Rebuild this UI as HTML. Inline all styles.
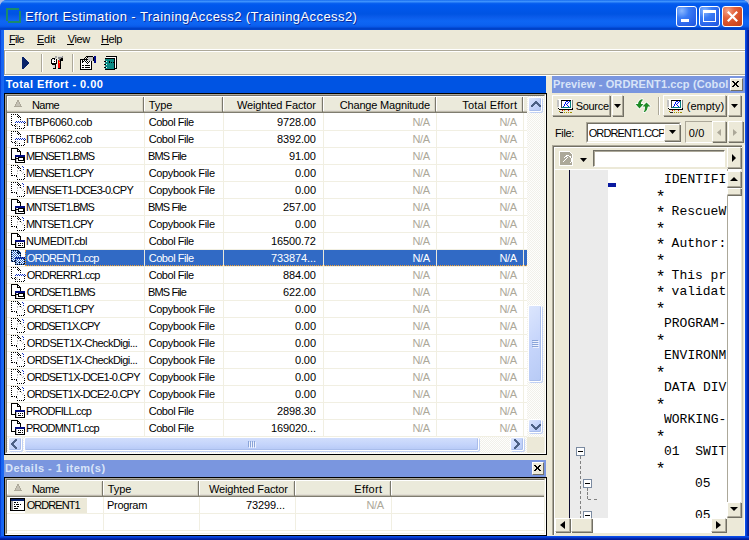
<!DOCTYPE html><html><head><meta charset="utf-8"><style>
*{margin:0;padding:0;box-sizing:border-box}
html,body{width:749px;height:540px;overflow:hidden;background:#a8bce8}
body{position:relative;font-family:"Liberation Sans",sans-serif;font-size:11px;color:#000}
.a,.t,.ic{position:absolute}
.t{white-space:nowrap;line-height:13px}
.m{position:absolute;font-family:"Liberation Mono",monospace;font-size:13px;line-height:16px;white-space:pre;overflow:hidden}
.st{display:inline-block;width:7.8px;font-size:17px;vertical-align:top;line-height:19px;text-indent:-0.5px}
.rb{position:absolute;background:#ece9d8;border:1px solid #fff;border-right-color:#aca899;border-bottom-color:#aca899;box-shadow:1px 1px 0 #716f64}
</style></head><body>

<div class="a" style="left:0px;top:0px;width:749px;height:540px;background:linear-gradient(90deg,#0842d8 0,#0842d8 1px,#1663f0 1px,#1a6af5 4px,#0a50f0 745px,#0846e0 746px,#0432c0 747px,#001c98 748px);border-radius:7px 7px 0 0"></div>
<div class="a" style="left:0px;top:536px;width:749px;height:4px;background:linear-gradient(180deg,#0a50f0 0,#0846e0 1px,#0432c0 2px,#001c98 3px);"></div>
<div class="a" style="left:0;top:0;width:749px;height:30px;border-radius:7px 7px 0 0;background:linear-gradient(180deg,#0a5ce8 0,#3d95ff 1px,#3c8ffb 2px,#0b63f0 3px,#0058ee 5px,#0054e3 14px,#0a5bea 17px,#0e66f4 21px,#0c62f0 25px,#0857e6 27px,#0044cc 28px,#0040c4 29px,#0046d0 30px)"></div>
<div class="a" style="left:6px;top:8px;width:13px;height:2px;background:#1a8a6c;"></div>
<div class="a" style="left:6px;top:8px;width:2px;height:13px;background:#1a8a6c;"></div>
<div class="a" style="left:19px;top:11px;width:2px;height:12px;background:#1a8a6c;"></div>
<div class="a" style="left:8px;top:21px;width:13px;height:2px;background:#1a8a6c;"></div>
<div class="t" style="left:25.00px;top:9px;color:#fff;letter-spacing:0.422px;line-height:16px;font-size:13px;text-shadow:1px 1px 0 #0a2a9a">Effort Estimation - TrainingAccess2 (TrainingAccess2)</div>
<div class="a" style="left:676px;top:6px;width:21px;height:21px;border:1px solid #fff;border-radius:3px;background:radial-gradient(circle at 25% 20%,#8ab8ff 0,#3a7cf5 35%,#2a64ea 70%,#1f55dc 100%)"></div>
<div class="a" style="left:699px;top:6px;width:21px;height:21px;border:1px solid #fff;border-radius:3px;background:radial-gradient(circle at 25% 20%,#8ab8ff 0,#3a7cf5 35%,#2a64ea 70%,#1f55dc 100%)"></div>
<div class="a" style="left:722px;top:6px;width:21px;height:21px;border:1px solid #fff;border-radius:3px;background:radial-gradient(circle at 25% 20%,#f4a48a 0,#e3613a 35%,#d24a22 70%,#c0401e 100%)"></div>
<div class="a" style="left:681px;top:19px;width:8px;height:3px;background:#fff;"></div>
<div class="a" style="left:703px;top:10px;width:13px;height:12px;border:1px solid #fff;border-top-width:3px"></div>
<svg class="a" style="left:722px;top:6px" width="21" height="21"><path d="M5.8 5.8L15.2 15.2M15.2 5.8L5.8 15.2" stroke="#fff" stroke-width="2.2"/></svg>
<div class="a" style="left:4px;top:30px;width:741px;height:506px;background:#ece9d8;"></div>
<div class="t" style="left:9.00px;top:33px;color:#000;letter-spacing:-0.681px;line-height:13px">File</div>
<div class="a" style="left:9px;top:44px;width:6px;height:1px;background:#000;"></div>
<div class="t" style="left:37.00px;top:33px;color:#000;letter-spacing:-0.239px;line-height:13px">Edit</div>
<div class="a" style="left:37px;top:44px;width:7px;height:1px;background:#000;"></div>
<div class="t" style="left:67.70px;top:33px;color:#000;letter-spacing:-0.411px;line-height:13px">View</div>
<div class="a" style="left:67px;top:44px;width:7px;height:1px;background:#000;"></div>
<div class="t" style="left:101.00px;top:33px;color:#000;letter-spacing:-0.406px;line-height:13px">Help</div>
<div class="a" style="left:101px;top:44px;width:8px;height:1px;background:#000;"></div>
<div class="a" style="left:4px;top:49px;width:741px;height:1px;background:#fff;"></div>
<div class="a" style="left:4px;top:50px;width:741px;height:1px;background:#aca899;"></div>
<div class="a" style="left:5px;top:51px;width:740px;height:1px;background:#fff;"></div>
<div class="a" style="left:4px;top:50px;width:1px;height:25px;background:#aca899;"></div>
<div class="a" style="left:5px;top:51px;width:1px;height:23px;background:#fff;"></div>
<div class="a" style="left:4px;top:74px;width:741px;height:1px;background:#aca899;"></div>
<div class="a" style="left:4px;top:75px;width:741px;height:1px;background:#fff;"></div>
<svg class="a" style="left:22px;top:57px" width="8" height="12" shape-rendering="crispEdges"><path d="M0 0h1l6 6l-6 6h-1z" fill="#0a246a"/></svg>
<div class="a" style="left:41px;top:54px;width:1px;height:18px;background:#aca899;"></div>
<div class="a" style="left:42px;top:54px;width:1px;height:18px;background:#fff;"></div>
<svg class="a" style="left:50px;top:55px" width="15" height="15" shape-rendering="crispEdges">
<rect x="1" y="4" width="6" height="5" fill="#000"/><rect x="2" y="3" width="4" height="7" fill="#000"/><rect x="2" y="4" width="4" height="4" fill="#fff"/><rect x="2" y="4" width="1" height="1" fill="#c8c8c8"/>
<rect x="4" y="3" width="1" height="2" fill="#000"/><rect x="4" y="6" width="1" height="1" fill="#000"/><rect x="5" y="1" width="2" height="2" fill="#a8a8a8"/><rect x="5" y="3" width="1" height="1" fill="#c8c8c8"/>
<rect x="3" y="10" width="2" height="3" fill="#d4d4d4"/><rect x="5" y="10" width="1" height="4" fill="#000"/><rect x="3" y="13" width="3" height="1" fill="#000"/>
<rect x="8" y="1" width="5" height="3" fill="#8c8c8c"/><rect x="8" y="1" width="4" height="1" fill="#dcdcdc"/><rect x="11" y="3" width="2" height="3" fill="#000"/>
<rect x="8" y="5" width="2" height="9" fill="#ff0000"/><rect x="10" y="4" width="1" height="10" fill="#000"/><rect x="9" y="4" width="1" height="2" fill="#6a7a8a"/><rect x="9" y="7" width="1" height="1" fill="#ffe000"/><rect x="8" y="13" width="3" height="1" fill="#000"/>
</svg>
<div class="a" style="left:72px;top:54px;width:1px;height:18px;background:#aca899;"></div>
<div class="a" style="left:73px;top:54px;width:1px;height:18px;background:#fff;"></div>
<svg class="a" style="left:77px;top:53px" width="22" height="18" shape-rendering="crispEdges">
<rect x="3" y="6" width="12" height="11" fill="#000"/><rect x="4" y="7" width="10" height="9" fill="#fff"/>
<rect x="5" y="12" width="2" height="1" fill="#000"/><rect x="8" y="12" width="5" height="1" fill="#000"/><rect x="5" y="14" width="2" height="1" fill="#000"/><rect x="8" y="14" width="5" height="1" fill="#000"/>
<path d="M9 3h1M8 4h1M10 4h1M7 5h1M9 5h1M11 5h1M6 6h1M8 6h1M10 6h1M12 6h1M5 7h1M7 7h1M9 7h1M11 7h1M13 7h1M6 8h1M8 8h1M10 8h1M12 8h1M9 9h1M11 9h1M10 10h1" stroke="#000"/>
<rect x="5" y="8" width="1" height="2" fill="#000"/>
<rect x="10" y="3" width="6" height="1" fill="#000"/><rect x="11" y="4" width="5" height="4" fill="#c4c4c4"/><rect x="16" y="4" width="1" height="4" fill="#000"/>
<rect x="17" y="3" width="2" height="7" fill="#000a8a"/>
</svg>
<svg class="a" style="left:100px;top:53px" width="22" height="18" shape-rendering="crispEdges">
<rect x="6" y="3" width="11" height="13" fill="#000"/><rect x="6" y="4" width="10" height="11" fill="#fff"/>
<rect x="5" y="5" width="10" height="12" fill="#000"/><rect x="5" y="6" width="9" height="10" fill="#0a8a84"/>
<path d="M4 8h3M4 11h3M4 14h3" stroke="#000"/><rect x="6" y="8" width="1" height="1" fill="#fff"/><rect x="6" y="11" width="1" height="1" fill="#fff"/><rect x="6" y="14" width="1" height="1" fill="#fff"/>
<rect x="9" y="8" width="1" height="2" fill="#000"/><rect x="11" y="9" width="1" height="1" fill="#000"/><rect x="13" y="9" width="1" height="1" fill="#000"/>
</svg>
<div class="a" style="left:4px;top:76px;width:542px;height:17px;background:#0054e3;"></div>
<div class="t" style="left:5.70px;top:78px;color:#fff;letter-spacing:0.450px;line-height:13px;font-weight:bold">Total Effort - 0.00</div>
<div class="a" style="left:4px;top:93px;width:543px;height:362px;background:#fff;border:1px solid #000"></div>
<div class="a" style="left:5px;top:94px;width:541px;height:360px;background:transparent;border:1px solid #aca899;border-right-color:#fff;border-bottom-color:#fff"></div>
<div class="a" style="left:6px;top:95px;width:539px;height:358px;background:transparent;border:1px solid #716f64;border-right-color:#f1efe2;border-bottom-color:#f1efe2"></div>
<div class="a" style="left:7px;top:96px;width:520px;height:17px;background:#ebeadb;border-top:1px solid #fff;border-left:1px solid #fff"></div>
<div class="a" style="left:7px;top:110px;width:520px;height:1px;background:#e2ded5;"></div>
<div class="a" style="left:7px;top:111px;width:520px;height:1px;background:#bdbaab;"></div>
<div class="a" style="left:7px;top:112px;width:520px;height:1px;background:#7f7c70;"></div>
<div class="a" style="left:142px;top:98px;width:1px;height:13px;background:#d8d5c6;"></div>
<div class="a" style="left:143px;top:97px;width:1px;height:15px;background:#7a786c;"></div>
<div class="a" style="left:144px;top:97px;width:1px;height:14px;background:#fff;"></div>
<div class="a" style="left:221px;top:98px;width:1px;height:13px;background:#d8d5c6;"></div>
<div class="a" style="left:222px;top:97px;width:1px;height:15px;background:#7a786c;"></div>
<div class="a" style="left:223px;top:97px;width:1px;height:14px;background:#fff;"></div>
<div class="a" style="left:321px;top:98px;width:1px;height:13px;background:#d8d5c6;"></div>
<div class="a" style="left:322px;top:97px;width:1px;height:15px;background:#7a786c;"></div>
<div class="a" style="left:323px;top:97px;width:1px;height:14px;background:#fff;"></div>
<div class="a" style="left:434px;top:98px;width:1px;height:13px;background:#d8d5c6;"></div>
<div class="a" style="left:435px;top:97px;width:1px;height:15px;background:#7a786c;"></div>
<div class="a" style="left:436px;top:97px;width:1px;height:14px;background:#fff;"></div>
<div class="a" style="left:521px;top:98px;width:1px;height:13px;background:#d8d5c6;"></div>
<div class="a" style="left:522px;top:97px;width:1px;height:15px;background:#7a786c;"></div>
<div class="a" style="left:523px;top:97px;width:1px;height:14px;background:#fff;"></div>
<svg class="a" style="left:14px;top:100px" width="8" height="7" shape-rendering="crispEdges"><path d="M3 0h2v2h1v2h1v2h1v1h-8v-1h1v-2h1v-2h1z" fill="#aca899"/><path d="M3 2h2v2h1v2h-4v-2h1z" fill="#c4c1b4"/></svg>
<div class="t" style="left:32.00px;top:99px;color:#000;letter-spacing:-0.586px;line-height:13px">Name</div>
<div class="t" style="left:148.70px;top:99px;color:#000;letter-spacing:-0.087px;line-height:13px">Type</div>
<div class="t" style="left:236.90px;top:99px;color:#000;letter-spacing:-0.100px;line-height:13px">Weighted Factor</div>
<div class="t" style="left:339.82px;top:99px;color:#000;letter-spacing:-0.185px;line-height:13px">Change Magnitude</div>
<div class="t" style="left:462.22px;top:99px;color:#000;letter-spacing:0.218px;line-height:13px">Total Effort</div>
<div class="a" style="left:7px;top:130px;width:520px;height:1px;background:#f1efe2;"></div>
<svg class="ic" style="left:11px;top:114px" width="16" height="16" shape-rendering="crispEdges"><path d="M0 0h1v1h-1zM2 0h1v1h-1zM4 0h1v1h-1zM6 0h1v1h-1zM7 1h1v1h-1zM0 2h1v1h-1zM6 2h1v1h-1zM8 2h1v1h-1zM7 3h1v1h-1zM9 3h1v1h-1zM0 4h1v1h-1zM9 5h1v1h-1zM0 6h1v1h-1zM0 8h1v1h-1zM13 9h1v1h-1zM0 10h1v1h-1zM4 10h1v1h-1zM1 11h1v1h-1zM3 11h1v1h-1zM13 11h1v1h-1zM4 12h1v1h-1zM8 12h1v1h-1zM13 13h1v1h-1zM4 14h1v1h-1zM6 14h1v1h-1zM8 14h1v1h-1zM10 14h1v1h-1zM12 14h1v1h-1z" fill="#000"/><path d="M4 8h1v1h-1zM5 7h1v1h-1zM6 8h1v1h-1zM7 7h1v1h-1zM8 8h1v1h-1zM9 7h1v1h-1zM10 8h1v1h-1zM11 7h1v1h-1zM12 8h1v1h-1zM13 7h1v1h-1zM14 8h1v1h-1z" fill="#1030c0"/><path d="M5 11h1v1h-1zM6 10h1v1h-1zM6 12h1v1h-1z" fill="#c0c0c0"/></svg>
<div class="t" style="left:26.00px;top:116px;color:#000;letter-spacing:-0.309px;line-height:13px">ITBP6060.cob</div>
<div class="t" style="left:148.70px;top:116px;color:#000;letter-spacing:-0.452px;line-height:13px">Cobol File</div>
<div class="t" style="left:276.89px;top:116px;color:#000;letter-spacing:-0.109px;line-height:13px">9728.00</div>
<div class="t" style="left:412.55px;top:116px;color:#aca899;letter-spacing:-0.446px;line-height:13px">N/A</div>
<div class="t" style="left:499.55px;top:116px;color:#aca899;letter-spacing:-0.446px;line-height:13px">N/A</div>
<div class="a" style="left:7px;top:147px;width:520px;height:1px;background:#f1efe2;"></div>
<svg class="ic" style="left:11px;top:131px" width="16" height="16" shape-rendering="crispEdges"><path d="M0 0h1v1h-1zM2 0h1v1h-1zM4 0h1v1h-1zM6 0h1v1h-1zM7 1h1v1h-1zM0 2h1v1h-1zM6 2h1v1h-1zM8 2h1v1h-1zM7 3h1v1h-1zM9 3h1v1h-1zM0 4h1v1h-1zM9 5h1v1h-1zM0 6h1v1h-1zM0 8h1v1h-1zM13 9h1v1h-1zM0 10h1v1h-1zM4 10h1v1h-1zM1 11h1v1h-1zM3 11h1v1h-1zM13 11h1v1h-1zM4 12h1v1h-1zM8 12h1v1h-1zM13 13h1v1h-1zM4 14h1v1h-1zM6 14h1v1h-1zM8 14h1v1h-1zM10 14h1v1h-1zM12 14h1v1h-1z" fill="#000"/><path d="M4 8h1v1h-1zM5 7h1v1h-1zM6 8h1v1h-1zM7 7h1v1h-1zM8 8h1v1h-1zM9 7h1v1h-1zM10 8h1v1h-1zM11 7h1v1h-1zM12 8h1v1h-1zM13 7h1v1h-1zM14 8h1v1h-1z" fill="#1030c0"/><path d="M5 11h1v1h-1zM6 10h1v1h-1zM6 12h1v1h-1z" fill="#c0c0c0"/></svg>
<div class="t" style="left:26.00px;top:133px;color:#000;letter-spacing:-0.309px;line-height:13px">ITBP6062.cob</div>
<div class="t" style="left:148.70px;top:133px;color:#000;letter-spacing:-0.452px;line-height:13px">Cobol File</div>
<div class="t" style="left:276.89px;top:133px;color:#000;letter-spacing:-0.109px;line-height:13px">8392.00</div>
<div class="t" style="left:412.55px;top:133px;color:#aca899;letter-spacing:-0.446px;line-height:13px">N/A</div>
<div class="t" style="left:499.55px;top:133px;color:#aca899;letter-spacing:-0.446px;line-height:13px">N/A</div>
<div class="a" style="left:7px;top:164px;width:520px;height:1px;background:#f1efe2;"></div>
<svg class="ic" style="left:11px;top:148px" width="16" height="16" shape-rendering="crispEdges"><path d="M1 1h6v2h2v4h-5v4h-3z" fill="#fff"/><path d="M0 0h7v1h-7zM0 1h1v11h-1zM1 11h3v1h-3zM6 1h2v1h-2zM6 2h1v1h-1zM8 2h1v1h-1zM6 3h4v1h-4zM9 4h1v3h-1z" fill="#000"/><rect x="7" y="2" width="1" height="1" fill="#fff"/>
<rect x="4" y="7" width="10" height="8" fill="#000"/><rect x="4" y="7" width="10" height="2" fill="#000a80"/><rect x="5" y="9" width="8" height="5" fill="#fff"/><rect x="5" y="9" width="1" height="5" fill="#c8c8c8"/><rect x="7" y="9" width="6" height="4" fill="#000"/><rect x="8" y="10" width="4" height="2" fill="#fff"/><rect x="5" y="10" width="2" height="1" fill="#000"/></svg>
<div class="t" style="left:26.00px;top:150px;color:#000;letter-spacing:-0.986px;line-height:13px">MENSET1.BMS</div>
<div class="t" style="left:148.00px;top:150px;color:#000;letter-spacing:-0.827px;line-height:13px">BMS File</div>
<div class="t" style="left:288.89px;top:150px;color:#000;letter-spacing:-0.105px;line-height:13px">91.00</div>
<div class="t" style="left:412.55px;top:150px;color:#aca899;letter-spacing:-0.446px;line-height:13px">N/A</div>
<div class="t" style="left:499.55px;top:150px;color:#aca899;letter-spacing:-0.446px;line-height:13px">N/A</div>
<div class="a" style="left:7px;top:181px;width:520px;height:1px;background:#f1efe2;"></div>
<svg class="ic" style="left:11px;top:165px" width="16" height="16" shape-rendering="crispEdges"><path d="M0 0h1v1h-1zM2 0h1v1h-1zM4 0h1v1h-1zM6 0h1v1h-1zM7 1h1v1h-1zM0 2h1v1h-1zM6 2h1v1h-1zM8 2h1v1h-1zM7 3h1v1h-1zM9 3h1v1h-1zM0 4h1v1h-1zM9 5h1v1h-1zM0 6h1v1h-1zM0 8h1v1h-1zM13 9h1v1h-1zM0 10h1v1h-1zM1 10h1v1h-1zM3 10h1v1h-1zM5 10h1v1h-1zM13 11h1v1h-1zM13 13h1v1h-1zM6 14h1v1h-1zM8 14h1v1h-1zM10 14h1v1h-1zM12 14h1v1h-1zM5 11h1v1h-1z" fill="#000"/><path d="M11 1h1v1h-1zM12 2h1v1h-1zM12 4h1v1h-1z" fill="#1030c0"/><path d="M6 5h1v1h-1zM8 5h1v1h-1zM6 6h1v1h-1zM10 6h1v1h-1zM6 8h1v1h-1zM11 8h1v1h-1zM12 7h1v1h-1zM6 12h1v1h-1z" fill="#c0c0c0"/></svg>
<div class="t" style="left:26.00px;top:167px;color:#000;letter-spacing:-0.966px;line-height:13px">MENSET1.CPY</div>
<div class="t" style="left:148.70px;top:167px;color:#000;letter-spacing:-0.332px;line-height:13px">Copybook File</div>
<div class="t" style="left:294.90px;top:167px;color:#000;letter-spacing:-0.102px;line-height:13px">0.00</div>
<div class="t" style="left:412.55px;top:167px;color:#aca899;letter-spacing:-0.446px;line-height:13px">N/A</div>
<div class="t" style="left:499.55px;top:167px;color:#aca899;letter-spacing:-0.446px;line-height:13px">N/A</div>
<div class="a" style="left:7px;top:198px;width:520px;height:1px;background:#f1efe2;"></div>
<svg class="ic" style="left:11px;top:182px" width="16" height="16" shape-rendering="crispEdges"><path d="M0 0h1v1h-1zM2 0h1v1h-1zM4 0h1v1h-1zM6 0h1v1h-1zM7 1h1v1h-1zM0 2h1v1h-1zM6 2h1v1h-1zM8 2h1v1h-1zM7 3h1v1h-1zM9 3h1v1h-1zM0 4h1v1h-1zM9 5h1v1h-1zM0 6h1v1h-1zM0 8h1v1h-1zM13 9h1v1h-1zM0 10h1v1h-1zM1 10h1v1h-1zM3 10h1v1h-1zM5 10h1v1h-1zM13 11h1v1h-1zM13 13h1v1h-1zM6 14h1v1h-1zM8 14h1v1h-1zM10 14h1v1h-1zM12 14h1v1h-1zM5 11h1v1h-1z" fill="#000"/><path d="M11 1h1v1h-1zM12 2h1v1h-1zM12 4h1v1h-1z" fill="#1030c0"/><path d="M6 5h1v1h-1zM8 5h1v1h-1zM6 6h1v1h-1zM10 6h1v1h-1zM6 8h1v1h-1zM11 8h1v1h-1zM12 7h1v1h-1zM6 12h1v1h-1z" fill="#c0c0c0"/></svg>
<div class="t" style="left:26.00px;top:184px;color:#000;letter-spacing:-0.745px;line-height:13px">MENSET1-DCE3-0.CPY</div>
<div class="t" style="left:148.70px;top:184px;color:#000;letter-spacing:-0.332px;line-height:13px">Copybook File</div>
<div class="t" style="left:294.90px;top:184px;color:#000;letter-spacing:-0.102px;line-height:13px">0.00</div>
<div class="t" style="left:412.55px;top:184px;color:#aca899;letter-spacing:-0.446px;line-height:13px">N/A</div>
<div class="t" style="left:499.55px;top:184px;color:#aca899;letter-spacing:-0.446px;line-height:13px">N/A</div>
<div class="a" style="left:7px;top:215px;width:520px;height:1px;background:#f1efe2;"></div>
<svg class="ic" style="left:11px;top:199px" width="16" height="16" shape-rendering="crispEdges"><path d="M1 1h6v2h2v4h-5v4h-3z" fill="#fff"/><path d="M0 0h7v1h-7zM0 1h1v11h-1zM1 11h3v1h-3zM6 1h2v1h-2zM6 2h1v1h-1zM8 2h1v1h-1zM6 3h4v1h-4zM9 4h1v3h-1z" fill="#000"/><rect x="7" y="2" width="1" height="1" fill="#fff"/>
<rect x="4" y="7" width="10" height="8" fill="#000"/><rect x="4" y="7" width="10" height="2" fill="#000a80"/><rect x="5" y="9" width="8" height="5" fill="#fff"/><rect x="5" y="9" width="1" height="5" fill="#c8c8c8"/><rect x="7" y="9" width="6" height="4" fill="#000"/><rect x="8" y="10" width="4" height="2" fill="#fff"/><rect x="5" y="10" width="2" height="1" fill="#000"/></svg>
<div class="t" style="left:26.00px;top:201px;color:#000;letter-spacing:-0.930px;line-height:13px">MNTSET1.BMS</div>
<div class="t" style="left:148.00px;top:201px;color:#000;letter-spacing:-0.827px;line-height:13px">BMS File</div>
<div class="t" style="left:282.89px;top:201px;color:#000;letter-spacing:-0.107px;line-height:13px">257.00</div>
<div class="t" style="left:412.55px;top:201px;color:#aca899;letter-spacing:-0.446px;line-height:13px">N/A</div>
<div class="t" style="left:499.55px;top:201px;color:#aca899;letter-spacing:-0.446px;line-height:13px">N/A</div>
<div class="a" style="left:7px;top:232px;width:520px;height:1px;background:#f1efe2;"></div>
<svg class="ic" style="left:11px;top:216px" width="16" height="16" shape-rendering="crispEdges"><path d="M0 0h1v1h-1zM2 0h1v1h-1zM4 0h1v1h-1zM6 0h1v1h-1zM7 1h1v1h-1zM0 2h1v1h-1zM6 2h1v1h-1zM8 2h1v1h-1zM7 3h1v1h-1zM9 3h1v1h-1zM0 4h1v1h-1zM9 5h1v1h-1zM0 6h1v1h-1zM0 8h1v1h-1zM13 9h1v1h-1zM0 10h1v1h-1zM1 10h1v1h-1zM3 10h1v1h-1zM5 10h1v1h-1zM13 11h1v1h-1zM13 13h1v1h-1zM6 14h1v1h-1zM8 14h1v1h-1zM10 14h1v1h-1zM12 14h1v1h-1zM5 11h1v1h-1z" fill="#000"/><path d="M11 1h1v1h-1zM12 2h1v1h-1zM12 4h1v1h-1z" fill="#1030c0"/><path d="M6 5h1v1h-1zM8 5h1v1h-1zM6 6h1v1h-1zM10 6h1v1h-1zM6 8h1v1h-1zM11 8h1v1h-1zM12 7h1v1h-1zM6 12h1v1h-1z" fill="#c0c0c0"/></svg>
<div class="t" style="left:26.00px;top:218px;color:#000;letter-spacing:-0.910px;line-height:13px">MNTSET1.CPY</div>
<div class="t" style="left:148.70px;top:218px;color:#000;letter-spacing:-0.332px;line-height:13px">Copybook File</div>
<div class="t" style="left:294.90px;top:218px;color:#000;letter-spacing:-0.102px;line-height:13px">0.00</div>
<div class="t" style="left:412.55px;top:218px;color:#aca899;letter-spacing:-0.446px;line-height:13px">N/A</div>
<div class="t" style="left:499.55px;top:218px;color:#aca899;letter-spacing:-0.446px;line-height:13px">N/A</div>
<div class="a" style="left:7px;top:249px;width:520px;height:1px;background:#f1efe2;"></div>
<svg class="ic" style="left:11px;top:233px" width="16" height="16" shape-rendering="crispEdges"><path d="M1 1h6v2h2v4h-5v4h-3z" fill="#fff"/><path d="M0 0h7v1h-7zM0 1h1v11h-1zM1 11h3v1h-3zM6 1h2v1h-2zM6 2h1v1h-1zM8 2h1v1h-1zM6 3h4v1h-4zM9 4h1v3h-1z" fill="#000"/><rect x="7" y="2" width="1" height="1" fill="#fff"/>
<rect x="4" y="7" width="10" height="8" fill="#000"/><rect x="4" y="7" width="10" height="2" fill="#000a80"/><rect x="5" y="9" width="8" height="5" fill="#fff"/><rect x="5" y="9" width="1" height="5" fill="#c8c8c8"/><path d="M7 10h1v1h-1zM9 10h1v1h-1zM11 10h1v1h-1zM7 12h3v1h-3zM11 12h1v1h-1z" fill="#000"/></svg>
<div class="t" style="left:26.00px;top:235px;color:#000;letter-spacing:-0.455px;line-height:13px">NUMEDIT.cbl</div>
<div class="t" style="left:148.70px;top:235px;color:#000;letter-spacing:-0.452px;line-height:13px">Cobol File</div>
<div class="t" style="left:270.89px;top:235px;color:#000;letter-spacing:-0.110px;line-height:13px">16500.72</div>
<div class="t" style="left:412.55px;top:235px;color:#aca899;letter-spacing:-0.446px;line-height:13px">N/A</div>
<div class="t" style="left:499.55px;top:235px;color:#aca899;letter-spacing:-0.446px;line-height:13px">N/A</div>
<div class="a" style="left:25px;top:250px;width:502px;height:16px;background:#316ac5;"></div>
<div class="a" style="left:25px;top:265px;width:502px;height:1px;background:transparent;border-top:1px dotted #f5a030"></div>
<div class="a" style="left:25px;top:250px;width:1px;height:16px;background:transparent;border-left:1px dotted #f5a030"></div>
<div class="a" style="left:7px;top:266px;width:520px;height:1px;background:#f1efe2;"></div>
<svg class="ic" style="left:11px;top:250px" width="16" height="16" shape-rendering="crispEdges"><path d="M1 1h6v2h2v4h-5v4h-3z" fill="#fff"/><path d="M0 0h7v1h-7zM0 1h1v11h-1zM1 11h3v1h-3zM6 1h2v1h-2zM6 2h1v1h-1zM8 2h1v1h-1zM6 3h4v1h-4zM9 4h1v3h-1z" fill="#000"/><rect x="7" y="2" width="1" height="1" fill="#fff"/>
<rect x="4" y="7" width="10" height="8" fill="#000"/><rect x="4" y="7" width="10" height="2" fill="#000a80"/><rect x="5" y="9" width="8" height="5" fill="#fff"/><rect x="5" y="9" width="1" height="5" fill="#c8c8c8"/><path d="M7 10h1v1h-1zM9 10h1v1h-1zM11 10h1v1h-1zM7 12h3v1h-3zM11 12h1v1h-1z" fill="#000"/></svg><svg class="ic" style="left:11px;top:250px" width="16" height="16" shape-rendering="crispEdges"><defs><pattern id="dp" width="2" height="2" patternUnits="userSpaceOnUse"><rect x="1" y="0" width="1" height="1" fill="#316ac5"/><rect x="0" y="1" width="1" height="1" fill="#316ac5"/></pattern></defs><path d="M0 0h8l2 2v5h4v8h-10v-3h-4z" fill="url(#dp)"/></svg>
<div class="t" style="left:26.70px;top:252px;color:#fff;letter-spacing:-0.723px;line-height:13px">ORDRENT1.ccp</div>
<div class="t" style="left:148.70px;top:252px;color:#fff;letter-spacing:-0.452px;line-height:13px">Cobol File</div>
<div class="t" style="left:270.90px;top:252px;color:#fff;letter-spacing:-0.097px;line-height:13px">733874...</div>
<div class="t" style="left:412.55px;top:252px;color:#fff;letter-spacing:-0.446px;line-height:13px">N/A</div>
<div class="t" style="left:499.55px;top:252px;color:#fff;letter-spacing:-0.446px;line-height:13px">N/A</div>
<div class="a" style="left:7px;top:283px;width:520px;height:1px;background:#f1efe2;"></div>
<svg class="ic" style="left:11px;top:267px" width="16" height="16" shape-rendering="crispEdges"><path d="M0 0h1v1h-1zM2 0h1v1h-1zM4 0h1v1h-1zM6 0h1v1h-1zM7 1h1v1h-1zM0 2h1v1h-1zM6 2h1v1h-1zM8 2h1v1h-1zM7 3h1v1h-1zM9 3h1v1h-1zM0 4h1v1h-1zM9 5h1v1h-1zM0 6h1v1h-1zM0 8h1v1h-1zM13 9h1v1h-1zM0 10h1v1h-1zM4 10h1v1h-1zM1 11h1v1h-1zM3 11h1v1h-1zM13 11h1v1h-1zM4 12h1v1h-1zM8 12h1v1h-1zM13 13h1v1h-1zM4 14h1v1h-1zM6 14h1v1h-1zM8 14h1v1h-1zM10 14h1v1h-1zM12 14h1v1h-1z" fill="#000"/><path d="M4 8h1v1h-1zM5 7h1v1h-1zM6 8h1v1h-1zM7 7h1v1h-1zM8 8h1v1h-1zM9 7h1v1h-1zM10 8h1v1h-1zM11 7h1v1h-1zM12 8h1v1h-1zM13 7h1v1h-1zM14 8h1v1h-1z" fill="#1030c0"/><path d="M5 11h1v1h-1zM6 10h1v1h-1zM6 12h1v1h-1z" fill="#c0c0c0"/></svg>
<div class="t" style="left:26.70px;top:269px;color:#000;letter-spacing:-0.742px;line-height:13px">ORDRERR1.ccp</div>
<div class="t" style="left:148.70px;top:269px;color:#000;letter-spacing:-0.452px;line-height:13px">Cobol File</div>
<div class="t" style="left:282.89px;top:269px;color:#000;letter-spacing:-0.107px;line-height:13px">884.00</div>
<div class="t" style="left:412.55px;top:269px;color:#aca899;letter-spacing:-0.446px;line-height:13px">N/A</div>
<div class="t" style="left:499.55px;top:269px;color:#aca899;letter-spacing:-0.446px;line-height:13px">N/A</div>
<div class="a" style="left:7px;top:300px;width:520px;height:1px;background:#f1efe2;"></div>
<svg class="ic" style="left:11px;top:284px" width="16" height="16" shape-rendering="crispEdges"><path d="M1 1h6v2h2v4h-5v4h-3z" fill="#fff"/><path d="M0 0h7v1h-7zM0 1h1v11h-1zM1 11h3v1h-3zM6 1h2v1h-2zM6 2h1v1h-1zM8 2h1v1h-1zM6 3h4v1h-4zM9 4h1v3h-1z" fill="#000"/><rect x="7" y="2" width="1" height="1" fill="#fff"/>
<rect x="4" y="7" width="10" height="8" fill="#000"/><rect x="4" y="7" width="10" height="2" fill="#000a80"/><rect x="5" y="9" width="8" height="5" fill="#fff"/><rect x="5" y="9" width="1" height="5" fill="#c8c8c8"/><rect x="7" y="9" width="6" height="4" fill="#000"/><rect x="8" y="10" width="4" height="2" fill="#fff"/><rect x="5" y="10" width="2" height="1" fill="#000"/></svg>
<div class="t" style="left:26.70px;top:286px;color:#000;letter-spacing:-0.986px;line-height:13px">ORDSET1.BMS</div>
<div class="t" style="left:148.00px;top:286px;color:#000;letter-spacing:-0.827px;line-height:13px">BMS File</div>
<div class="t" style="left:282.89px;top:286px;color:#000;letter-spacing:-0.107px;line-height:13px">622.00</div>
<div class="t" style="left:412.55px;top:286px;color:#aca899;letter-spacing:-0.446px;line-height:13px">N/A</div>
<div class="t" style="left:499.55px;top:286px;color:#aca899;letter-spacing:-0.446px;line-height:13px">N/A</div>
<div class="a" style="left:7px;top:317px;width:520px;height:1px;background:#f1efe2;"></div>
<svg class="ic" style="left:11px;top:301px" width="16" height="16" shape-rendering="crispEdges"><path d="M0 0h1v1h-1zM2 0h1v1h-1zM4 0h1v1h-1zM6 0h1v1h-1zM7 1h1v1h-1zM0 2h1v1h-1zM6 2h1v1h-1zM8 2h1v1h-1zM7 3h1v1h-1zM9 3h1v1h-1zM0 4h1v1h-1zM9 5h1v1h-1zM0 6h1v1h-1zM0 8h1v1h-1zM13 9h1v1h-1zM0 10h1v1h-1zM1 10h1v1h-1zM3 10h1v1h-1zM5 10h1v1h-1zM13 11h1v1h-1zM13 13h1v1h-1zM6 14h1v1h-1zM8 14h1v1h-1zM10 14h1v1h-1zM12 14h1v1h-1zM5 11h1v1h-1z" fill="#000"/><path d="M11 1h1v1h-1zM12 2h1v1h-1zM12 4h1v1h-1z" fill="#1030c0"/><path d="M6 5h1v1h-1zM8 5h1v1h-1zM6 6h1v1h-1zM10 6h1v1h-1zM6 8h1v1h-1zM11 8h1v1h-1zM12 7h1v1h-1zM6 12h1v1h-1z" fill="#c0c0c0"/></svg>
<div class="t" style="left:26.70px;top:303px;color:#000;letter-spacing:-0.966px;line-height:13px">ORDSET1.CPY</div>
<div class="t" style="left:148.70px;top:303px;color:#000;letter-spacing:-0.332px;line-height:13px">Copybook File</div>
<div class="t" style="left:294.90px;top:303px;color:#000;letter-spacing:-0.102px;line-height:13px">0.00</div>
<div class="t" style="left:412.55px;top:303px;color:#aca899;letter-spacing:-0.446px;line-height:13px">N/A</div>
<div class="t" style="left:499.55px;top:303px;color:#aca899;letter-spacing:-0.446px;line-height:13px">N/A</div>
<div class="a" style="left:7px;top:334px;width:520px;height:1px;background:#f1efe2;"></div>
<svg class="ic" style="left:11px;top:318px" width="16" height="16" shape-rendering="crispEdges"><path d="M0 0h1v1h-1zM2 0h1v1h-1zM4 0h1v1h-1zM6 0h1v1h-1zM7 1h1v1h-1zM0 2h1v1h-1zM6 2h1v1h-1zM8 2h1v1h-1zM7 3h1v1h-1zM9 3h1v1h-1zM0 4h1v1h-1zM9 5h1v1h-1zM0 6h1v1h-1zM0 8h1v1h-1zM13 9h1v1h-1zM0 10h1v1h-1zM1 10h1v1h-1zM3 10h1v1h-1zM5 10h1v1h-1zM13 11h1v1h-1zM13 13h1v1h-1zM6 14h1v1h-1zM8 14h1v1h-1zM10 14h1v1h-1zM12 14h1v1h-1zM5 11h1v1h-1z" fill="#000"/><path d="M11 1h1v1h-1zM12 2h1v1h-1zM12 4h1v1h-1z" fill="#1030c0"/><path d="M6 5h1v1h-1zM8 5h1v1h-1zM6 6h1v1h-1zM10 6h1v1h-1zM6 8h1v1h-1zM11 8h1v1h-1zM12 7h1v1h-1zM6 12h1v1h-1z" fill="#c0c0c0"/></svg>
<div class="t" style="left:26.70px;top:320px;color:#000;letter-spacing:-0.997px;line-height:13px">ORDSET1X.CPY</div>
<div class="t" style="left:148.70px;top:320px;color:#000;letter-spacing:-0.332px;line-height:13px">Copybook File</div>
<div class="t" style="left:294.90px;top:320px;color:#000;letter-spacing:-0.102px;line-height:13px">0.00</div>
<div class="t" style="left:412.55px;top:320px;color:#aca899;letter-spacing:-0.446px;line-height:13px">N/A</div>
<div class="t" style="left:499.55px;top:320px;color:#aca899;letter-spacing:-0.446px;line-height:13px">N/A</div>
<div class="a" style="left:7px;top:351px;width:520px;height:1px;background:#f1efe2;"></div>
<svg class="ic" style="left:11px;top:335px" width="16" height="16" shape-rendering="crispEdges"><path d="M0 0h1v1h-1zM2 0h1v1h-1zM4 0h1v1h-1zM6 0h1v1h-1zM7 1h1v1h-1zM0 2h1v1h-1zM6 2h1v1h-1zM8 2h1v1h-1zM7 3h1v1h-1zM9 3h1v1h-1zM0 4h1v1h-1zM9 5h1v1h-1zM0 6h1v1h-1zM0 8h1v1h-1zM13 9h1v1h-1zM0 10h1v1h-1zM1 10h1v1h-1zM3 10h1v1h-1zM5 10h1v1h-1zM13 11h1v1h-1zM13 13h1v1h-1zM6 14h1v1h-1zM8 14h1v1h-1zM10 14h1v1h-1zM12 14h1v1h-1zM5 11h1v1h-1z" fill="#000"/><path d="M11 1h1v1h-1zM12 2h1v1h-1zM12 4h1v1h-1z" fill="#1030c0"/><path d="M6 5h1v1h-1zM8 5h1v1h-1zM6 6h1v1h-1zM10 6h1v1h-1zM6 8h1v1h-1zM11 8h1v1h-1zM12 7h1v1h-1zM6 12h1v1h-1z" fill="#c0c0c0"/></svg>
<div class="t" style="left:26.70px;top:337px;color:#000;letter-spacing:-0.560px;line-height:13px">ORDSET1X-CheckDigi...</div>
<div class="t" style="left:148.70px;top:337px;color:#000;letter-spacing:-0.332px;line-height:13px">Copybook File</div>
<div class="t" style="left:294.90px;top:337px;color:#000;letter-spacing:-0.102px;line-height:13px">0.00</div>
<div class="t" style="left:412.55px;top:337px;color:#aca899;letter-spacing:-0.446px;line-height:13px">N/A</div>
<div class="t" style="left:499.55px;top:337px;color:#aca899;letter-spacing:-0.446px;line-height:13px">N/A</div>
<div class="a" style="left:7px;top:368px;width:520px;height:1px;background:#f1efe2;"></div>
<svg class="ic" style="left:11px;top:352px" width="16" height="16" shape-rendering="crispEdges"><path d="M0 0h1v1h-1zM2 0h1v1h-1zM4 0h1v1h-1zM6 0h1v1h-1zM7 1h1v1h-1zM0 2h1v1h-1zM6 2h1v1h-1zM8 2h1v1h-1zM7 3h1v1h-1zM9 3h1v1h-1zM0 4h1v1h-1zM9 5h1v1h-1zM0 6h1v1h-1zM0 8h1v1h-1zM13 9h1v1h-1zM0 10h1v1h-1zM1 10h1v1h-1zM3 10h1v1h-1zM5 10h1v1h-1zM13 11h1v1h-1zM13 13h1v1h-1zM6 14h1v1h-1zM8 14h1v1h-1zM10 14h1v1h-1zM12 14h1v1h-1zM5 11h1v1h-1z" fill="#000"/><path d="M11 1h1v1h-1zM12 2h1v1h-1zM12 4h1v1h-1z" fill="#1030c0"/><path d="M6 5h1v1h-1zM8 5h1v1h-1zM6 6h1v1h-1zM10 6h1v1h-1zM6 8h1v1h-1zM11 8h1v1h-1zM12 7h1v1h-1zM6 12h1v1h-1z" fill="#c0c0c0"/></svg>
<div class="t" style="left:26.70px;top:354px;color:#000;letter-spacing:-0.560px;line-height:13px">ORDSET1X-CheckDigi...</div>
<div class="t" style="left:148.70px;top:354px;color:#000;letter-spacing:-0.332px;line-height:13px">Copybook File</div>
<div class="t" style="left:294.90px;top:354px;color:#000;letter-spacing:-0.102px;line-height:13px">0.00</div>
<div class="t" style="left:412.55px;top:354px;color:#aca899;letter-spacing:-0.446px;line-height:13px">N/A</div>
<div class="t" style="left:499.55px;top:354px;color:#aca899;letter-spacing:-0.446px;line-height:13px">N/A</div>
<div class="a" style="left:7px;top:385px;width:520px;height:1px;background:#f1efe2;"></div>
<svg class="ic" style="left:11px;top:369px" width="16" height="16" shape-rendering="crispEdges"><path d="M0 0h1v1h-1zM2 0h1v1h-1zM4 0h1v1h-1zM6 0h1v1h-1zM7 1h1v1h-1zM0 2h1v1h-1zM6 2h1v1h-1zM8 2h1v1h-1zM7 3h1v1h-1zM9 3h1v1h-1zM0 4h1v1h-1zM9 5h1v1h-1zM0 6h1v1h-1zM0 8h1v1h-1zM13 9h1v1h-1zM0 10h1v1h-1zM1 10h1v1h-1zM3 10h1v1h-1zM5 10h1v1h-1zM13 11h1v1h-1zM13 13h1v1h-1zM6 14h1v1h-1zM8 14h1v1h-1zM10 14h1v1h-1zM12 14h1v1h-1zM5 11h1v1h-1z" fill="#000"/><path d="M11 1h1v1h-1zM12 2h1v1h-1zM12 4h1v1h-1z" fill="#1030c0"/><path d="M6 5h1v1h-1zM8 5h1v1h-1zM6 6h1v1h-1zM10 6h1v1h-1zM6 8h1v1h-1zM11 8h1v1h-1zM12 7h1v1h-1zM6 12h1v1h-1z" fill="#c0c0c0"/></svg>
<div class="t" style="left:26.70px;top:371px;color:#000;letter-spacing:-0.776px;line-height:13px">ORDSET1X-DCE1-0.CPY</div>
<div class="t" style="left:148.70px;top:371px;color:#000;letter-spacing:-0.332px;line-height:13px">Copybook File</div>
<div class="t" style="left:294.90px;top:371px;color:#000;letter-spacing:-0.102px;line-height:13px">0.00</div>
<div class="t" style="left:412.55px;top:371px;color:#aca899;letter-spacing:-0.446px;line-height:13px">N/A</div>
<div class="t" style="left:499.55px;top:371px;color:#aca899;letter-spacing:-0.446px;line-height:13px">N/A</div>
<div class="a" style="left:7px;top:402px;width:520px;height:1px;background:#f1efe2;"></div>
<svg class="ic" style="left:11px;top:386px" width="16" height="16" shape-rendering="crispEdges"><path d="M0 0h1v1h-1zM2 0h1v1h-1zM4 0h1v1h-1zM6 0h1v1h-1zM7 1h1v1h-1zM0 2h1v1h-1zM6 2h1v1h-1zM8 2h1v1h-1zM7 3h1v1h-1zM9 3h1v1h-1zM0 4h1v1h-1zM9 5h1v1h-1zM0 6h1v1h-1zM0 8h1v1h-1zM13 9h1v1h-1zM0 10h1v1h-1zM1 10h1v1h-1zM3 10h1v1h-1zM5 10h1v1h-1zM13 11h1v1h-1zM13 13h1v1h-1zM6 14h1v1h-1zM8 14h1v1h-1zM10 14h1v1h-1zM12 14h1v1h-1zM5 11h1v1h-1z" fill="#000"/><path d="M11 1h1v1h-1zM12 2h1v1h-1zM12 4h1v1h-1z" fill="#1030c0"/><path d="M6 5h1v1h-1zM8 5h1v1h-1zM6 6h1v1h-1zM10 6h1v1h-1zM6 8h1v1h-1zM11 8h1v1h-1zM12 7h1v1h-1zM6 12h1v1h-1z" fill="#c0c0c0"/></svg>
<div class="t" style="left:26.70px;top:388px;color:#000;letter-spacing:-0.776px;line-height:13px">ORDSET1X-DCE2-0.CPY</div>
<div class="t" style="left:148.70px;top:388px;color:#000;letter-spacing:-0.332px;line-height:13px">Copybook File</div>
<div class="t" style="left:294.90px;top:388px;color:#000;letter-spacing:-0.102px;line-height:13px">0.00</div>
<div class="t" style="left:412.55px;top:388px;color:#aca899;letter-spacing:-0.446px;line-height:13px">N/A</div>
<div class="t" style="left:499.55px;top:388px;color:#aca899;letter-spacing:-0.446px;line-height:13px">N/A</div>
<div class="a" style="left:7px;top:419px;width:520px;height:1px;background:#f1efe2;"></div>
<svg class="ic" style="left:11px;top:403px" width="16" height="16" shape-rendering="crispEdges"><path d="M1 1h6v2h2v4h-5v4h-3z" fill="#fff"/><path d="M0 0h7v1h-7zM0 1h1v11h-1zM1 11h3v1h-3zM6 1h2v1h-2zM6 2h1v1h-1zM8 2h1v1h-1zM6 3h4v1h-4zM9 4h1v3h-1z" fill="#000"/><rect x="7" y="2" width="1" height="1" fill="#fff"/>
<rect x="4" y="7" width="10" height="8" fill="#000"/><rect x="4" y="7" width="10" height="2" fill="#000a80"/><rect x="5" y="9" width="8" height="5" fill="#fff"/><rect x="5" y="9" width="1" height="5" fill="#c8c8c8"/><path d="M7 10h1v1h-1zM9 10h1v1h-1zM11 10h1v1h-1zM7 12h3v1h-3zM11 12h1v1h-1z" fill="#000"/></svg>
<div class="t" style="left:26.00px;top:405px;color:#000;letter-spacing:-0.747px;line-height:13px">PRODFILL.ccp</div>
<div class="t" style="left:148.70px;top:405px;color:#000;letter-spacing:-0.452px;line-height:13px">Cobol File</div>
<div class="t" style="left:276.89px;top:405px;color:#000;letter-spacing:-0.109px;line-height:13px">2898.30</div>
<div class="t" style="left:412.55px;top:405px;color:#aca899;letter-spacing:-0.446px;line-height:13px">N/A</div>
<div class="t" style="left:499.55px;top:405px;color:#aca899;letter-spacing:-0.446px;line-height:13px">N/A</div>
<div class="a" style="left:7px;top:436px;width:520px;height:1px;background:#f1efe2;"></div>
<svg class="ic" style="left:11px;top:420px" width="16" height="16" shape-rendering="crispEdges"><path d="M1 1h6v2h2v4h-5v4h-3z" fill="#fff"/><path d="M0 0h7v1h-7zM0 1h1v11h-1zM1 11h3v1h-3zM6 1h2v1h-2zM6 2h1v1h-1zM8 2h1v1h-1zM6 3h4v1h-4zM9 4h1v3h-1z" fill="#000"/><rect x="7" y="2" width="1" height="1" fill="#fff"/>
<rect x="4" y="7" width="10" height="8" fill="#000"/><rect x="4" y="7" width="10" height="2" fill="#000a80"/><rect x="5" y="9" width="8" height="5" fill="#fff"/><rect x="5" y="9" width="1" height="5" fill="#c8c8c8"/><path d="M7 10h1v1h-1zM9 10h1v1h-1zM11 10h1v1h-1zM7 12h3v1h-3zM11 12h1v1h-1z" fill="#000"/></svg>
<div class="t" style="left:26.00px;top:422px;color:#000;letter-spacing:-0.742px;line-height:13px">PRODMNT1.ccp</div>
<div class="t" style="left:148.70px;top:422px;color:#000;letter-spacing:-0.452px;line-height:13px">Cobol File</div>
<div class="t" style="left:270.90px;top:422px;color:#000;letter-spacing:-0.097px;line-height:13px">169020...</div>
<div class="t" style="left:412.55px;top:422px;color:#aca899;letter-spacing:-0.446px;line-height:13px">N/A</div>
<div class="t" style="left:499.55px;top:422px;color:#aca899;letter-spacing:-0.446px;line-height:13px">N/A</div>
<div class="a" style="left:144px;top:113px;width:1px;height:324px;background:#f1efe2;"></div>
<div class="a" style="left:223px;top:113px;width:1px;height:324px;background:#f1efe2;"></div>
<div class="a" style="left:323px;top:113px;width:1px;height:324px;background:#f1efe2;"></div>
<div class="a" style="left:436px;top:113px;width:1px;height:324px;background:#f1efe2;"></div>
<div class="a" style="left:523px;top:113px;width:1px;height:324px;background:#f1efe2;"></div>
<div class="a" style="left:144px;top:250px;width:1px;height:16px;background:#ebe8da;"></div>
<div class="a" style="left:223px;top:250px;width:1px;height:16px;background:#ebe8da;"></div>
<div class="a" style="left:323px;top:250px;width:1px;height:16px;background:#ebe8da;"></div>
<div class="a" style="left:436px;top:250px;width:1px;height:16px;background:#ebe8da;"></div>
<div class="a" style="left:523px;top:250px;width:1px;height:16px;background:#ebe8da;"></div>
<div class="a" style="left:527px;top:96px;width:17px;height:341px;background:repeating-conic-gradient(#f1f0ea 0 25%,#fefefc 0 50%) 0 0/2px 2px;"></div>
<div class="a" style="left:528px;top:97px;width:14px;height:15px;border-radius:2px;background:linear-gradient(135deg,#dce6fd 0,#c6d5fb 50%,#b7caf5 100%);border:1px solid #fff;box-shadow:inset -1px -1px 0 #a9bdeb, 1px 1px 0 #c0d0f4"></div>
<svg class="a" style="left:531px;top:101px" width="10" height="10" shape-rendering="crispEdges"><path d="M4 0h2v1h-2zM3 1h4v1h-4zM2 2h6v1h-6zM1 3h3v1h-3zM6 3h3v1h-3zM0 4h3v1h-3zM7 4h3v1h-3zM0 5h2v1h-2zM8 5h2v1h-2z" fill="#4d6185"/></svg>
<div class="a" style="left:528px;top:305px;width:14px;height:77px;border-radius:2px;background:linear-gradient(135deg,#dce6fd 0,#c6d5fb 50%,#b7caf5 100%);border:1px solid #fff;box-shadow:inset -1px -1px 0 #a9bdeb, 1px 1px 0 #c0d0f4"></div>
<svg class="a" style="left:532px;top:340px" width="7" height="8" shape-rendering="crispEdges"><path d="M0 0.5h6M0 2.5h6M0 4.5h6M0 6.5h6" stroke="#8aa4d8"/><path d="M1 1.5h6M1 3.5h6M1 5.5h6M1 7.5h6" stroke="#eef2fd"/></svg>
<div class="a" style="left:528px;top:419px;width:14px;height:14px;border-radius:2px;background:linear-gradient(135deg,#dce6fd 0,#c6d5fb 50%,#b7caf5 100%);border:1px solid #fff;box-shadow:inset -1px -1px 0 #a9bdeb, 1px 1px 0 #c0d0f4"></div>
<svg class="a" style="left:531px;top:424px" width="10" height="10" shape-rendering="crispEdges"><path d="M4 5h2v1h-2zM3 4h4v1h-4zM2 3h6v1h-6zM1 2h3v1h-3zM6 2h3v1h-3zM0 1h3v1h-3zM7 1h3v1h-3zM0 0h2v1h-2zM8 0h2v1h-2z" fill="#4d6185"/></svg>
<div class="a" style="left:7px;top:437px;width:520px;height:16px;background:repeating-conic-gradient(#f1f0ea 0 25%,#fefefc 0 50%) 0 0/2px 2px;"></div>
<div class="a" style="left:8px;top:437px;width:14px;height:14px;border-radius:2px;background:linear-gradient(135deg,#dce6fd 0,#c6d5fb 50%,#b7caf5 100%);border:1px solid #fff;box-shadow:inset -1px -1px 0 #a9bdeb, 1px 1px 0 #c0d0f4"></div>
<svg class="a" style="left:11px;top:439px" width="10" height="10" shape-rendering="crispEdges"><path d="M0 4h1v2h-1zM1 3h1v4h-1zM2 2h1v6h-1zM3 1h1v3h-1zM3 6h1v3h-1zM4 0h1v3h-1zM4 7h1v3h-1zM5 0h1v2h-1zM5 8h1v2h-1z" fill="#4d6185"/></svg>
<div class="a" style="left:24px;top:437px;width:455px;height:14px;border-radius:2px;background:linear-gradient(180deg,#d2defc 0,#c4d4fb 55%,#b6c9f6 100%);border:1px solid #fff;box-shadow:inset -1px -1px 0 #a9bdeb, 1px 1px 0 #c0d0f4"></div>
<svg class="a" style="left:248px;top:441px" width="8" height="7" shape-rendering="crispEdges"><path d="M0.5 0v6M2.5 0v6M4.5 0v6M6.5 0v6" stroke="#8aa4d8"/><path d="M1.5 1v6M3.5 1v6M5.5 1v6M7.5 1v6" stroke="#eef2fd"/></svg>
<div class="a" style="left:510px;top:437px;width:14px;height:14px;border-radius:2px;background:linear-gradient(135deg,#dce6fd 0,#c6d5fb 50%,#b7caf5 100%);border:1px solid #fff;box-shadow:inset -1px -1px 0 #a9bdeb, 1px 1px 0 #c0d0f4"></div>
<svg class="a" style="left:514px;top:439px" width="10" height="10" shape-rendering="crispEdges"><path d="M5 4h1v2h-1zM4 3h1v4h-1zM3 2h1v6h-1zM2 1h1v3h-1zM2 6h1v3h-1zM1 0h1v3h-1zM1 7h1v3h-1zM0 0h1v2h-1zM0 8h1v2h-1z" fill="#4d6185"/></svg>
<div class="a" style="left:527px;top:437px;width:17px;height:16px;background:#ece9d8;"></div>
<div class="a" style="left:4px;top:460px;width:542px;height:17px;background:#7a96df;"></div>
<div class="t" style="left:5.00px;top:462px;color:#d8e4f8;letter-spacing:0.499px;line-height:13px;font-weight:bold">Details - 1 item(s)</div>
<div class="rb" style="left:532px;top:462px;width:12px;height:13px;box-shadow:none;border-right-color:#716f64;border-bottom-color:#716f64"></div>
<svg class="a" style="left:534px;top:465px" width="7" height="6" shape-rendering="crispEdges"><path d="M0 0h2v1h-2zM5 0h2v1h-2zM1 1h2v1h-2zM4 1h2v1h-2zM2 2h3v2h-3zM1 4h2v1h-2zM4 4h2v1h-2zM0 5h2v1h-2zM5 5h2v1h-2z" fill="#000"/></svg>
<div class="a" style="left:4px;top:477px;width:543px;height:59px;background:#fff;border:1px solid #000"></div>
<div class="a" style="left:5px;top:478px;width:541px;height:57px;background:transparent;border:1px solid #aca899;border-right-color:#fff;border-bottom-color:#fff"></div>
<div class="a" style="left:6px;top:479px;width:539px;height:55px;background:transparent;border:1px solid #716f64;border-right-color:#f1efe2;border-bottom-color:#f1efe2"></div>
<div class="a" style="left:7px;top:480px;width:537px;height:17px;background:#ebeadb;border-top:1px solid #fff;border-left:1px solid #fff"></div>
<div class="a" style="left:7px;top:494px;width:537px;height:1px;background:#e2ded5;"></div>
<div class="a" style="left:7px;top:495px;width:537px;height:1px;background:#bdbaab;"></div>
<div class="a" style="left:7px;top:496px;width:537px;height:1px;background:#7f7c70;"></div>
<div class="a" style="left:101px;top:482px;width:1px;height:13px;background:#d8d5c6;"></div>
<div class="a" style="left:102px;top:481px;width:1px;height:15px;background:#7a786c;"></div>
<div class="a" style="left:103px;top:481px;width:1px;height:14px;background:#fff;"></div>
<div class="a" style="left:197px;top:482px;width:1px;height:13px;background:#d8d5c6;"></div>
<div class="a" style="left:198px;top:481px;width:1px;height:15px;background:#7a786c;"></div>
<div class="a" style="left:199px;top:481px;width:1px;height:14px;background:#fff;"></div>
<div class="a" style="left:293px;top:482px;width:1px;height:13px;background:#d8d5c6;"></div>
<div class="a" style="left:294px;top:481px;width:1px;height:15px;background:#7a786c;"></div>
<div class="a" style="left:295px;top:481px;width:1px;height:14px;background:#fff;"></div>
<div class="a" style="left:389px;top:482px;width:1px;height:13px;background:#d8d5c6;"></div>
<div class="a" style="left:390px;top:481px;width:1px;height:15px;background:#7a786c;"></div>
<div class="a" style="left:391px;top:481px;width:1px;height:14px;background:#fff;"></div>
<svg class="a" style="left:14px;top:484px" width="8" height="7" shape-rendering="crispEdges"><path d="M3 0h2v2h1v2h1v2h1v1h-8v-1h1v-2h1v-2h1z" fill="#aca899"/><path d="M3 2h2v2h1v2h-4v-2h1z" fill="#c4c1b4"/></svg>
<div class="t" style="left:32.00px;top:483px;color:#000;letter-spacing:-0.586px;line-height:13px">Name</div>
<div class="t" style="left:107.70px;top:483px;color:#000;letter-spacing:-0.087px;line-height:13px">Type</div>
<div class="t" style="left:208.90px;top:483px;color:#000;letter-spacing:-0.100px;line-height:13px">Weighted Factor</div>
<div class="t" style="left:354.32px;top:483px;color:#000;letter-spacing:0.319px;line-height:13px">Effort</div>
<div class="a" style="left:25px;top:498px;width:62px;height:16px;background:#ece9d8;"></div>
<svg class="ic" style="left:10px;top:498px" width="15" height="13" shape-rendering="crispEdges"><rect x="0.5" y="0.5" width="14" height="12" fill="#fff" stroke="#000"/><rect x="1" y="1" width="13" height="2" fill="#0a246a"/><rect x="1" y="3" width="2" height="9" fill="#999"/><path d="M4 4.5h2M7 4.5h1M4 6.5h1M6 6.5h3M10 6.5h1M4 8.5h2M7 8.5h2M4 10.5h4" stroke="#000"/></svg>
<div class="t" style="left:26.70px;top:499px;color:#000;letter-spacing:-0.938px;line-height:13px">ORDRENT1</div>
<div class="t" style="left:107.00px;top:499px;color:#000;letter-spacing:-0.311px;line-height:13px">Program</div>
<div class="t" style="left:245.91px;top:499px;color:#000;letter-spacing:-0.095px;line-height:13px">73299...</div>
<div class="t" style="left:366.55px;top:499px;color:#aca899;letter-spacing:-0.446px;line-height:13px">N/A</div>
<div class="a" style="left:7px;top:513px;width:537px;height:1px;background:#f1efe2;"></div>
<div class="a" style="left:7px;top:530px;width:537px;height:1px;background:#f1efe2;"></div>
<div class="a" style="left:103px;top:497px;width:1px;height:34px;background:#f1efe2;"></div>
<div class="a" style="left:199px;top:497px;width:1px;height:34px;background:#f1efe2;"></div>
<div class="a" style="left:295px;top:497px;width:1px;height:34px;background:#f1efe2;"></div>
<div class="a" style="left:391px;top:497px;width:1px;height:34px;background:#f1efe2;"></div>
<div class="a" style="left:552px;top:76px;width:193px;height:17px;background:#7a96df;overflow:hidden"></div>
<div class="t" style="left:553.00px;top:78px;color:#d8e4f8;letter-spacing:0.129px;line-height:13px;font-weight:bold;width:190px;overflow:hidden">Preview - ORDRENT1.ccp (Cobol</div>
<div class="rb" style="left:730px;top:78px;width:13px;height:13px;box-shadow:none;border-right-color:#716f64;border-bottom-color:#716f64"></div>
<svg class="a" style="left:732px;top:81px" width="7" height="6" shape-rendering="crispEdges"><path d="M0 0h2v1h-2zM5 0h2v1h-2zM1 1h2v1h-2zM4 1h2v1h-2zM2 2h3v2h-3zM1 4h2v1h-2zM4 4h2v1h-2zM0 5h2v1h-2zM5 5h2v1h-2z" fill="#000"/></svg>
<div class="rb" style="left:552px;top:95px;width:58px;height:21px"></div>
<div class="rb" style="left:612px;top:95px;width:11px;height:21px"></div>
<div class="rb" style="left:663px;top:95px;width:63px;height:21px"></div>
<div class="rb" style="left:728px;top:95px;width:13px;height:21px"></div>
<svg class="a" style="left:554px;top:96px" width="20" height="18" shape-rendering="crispEdges">
<rect x="4" y="3" width="14" height="10" fill="#fff"/><rect x="3" y="4" width="2" height="7" fill="#c4c4c4"/><rect x="18" y="4" width="1" height="8" fill="#808080"/>
<rect x="7" y="4" width="10" height="1" fill="#000"/><rect x="7" y="5" width="1" height="7" fill="#404040"/><rect x="8" y="5" width="8" height="6" fill="#fff"/>
<rect x="16" y="5" width="1" height="6" fill="#008080"/><rect x="8" y="11" width="9" height="1" fill="#008080"/>
<path d="M9 10h1v1h-1zM10 9h1v1h-1zM10 8h1v1h-1zM11 7h1v1h-1zM11 6h1v1h-1zM12 5h2v1h-2zM14 6h1v1h-1zM13 7h1v1h-1zM12 8h1v1h-1zM13 9h1v1h-1zM14 10h1v1h-1zM15 5h1v1h-1z" fill="#0018f0"/>
<path d="M4 12h1v1h13v-1h1v2h-14v-1h-1z" fill="#000"/><rect x="8" y="14" width="1" height="1" fill="#d00000"/><rect x="14" y="14" width="1" height="1" fill="#d00000"/><rect x="10" y="14" width="1" height="1" fill="#c8b000"/>
<path d="M5 15h1v1h-1zM6 16h1v1h-1zM8 16h1v1h-1zM10 16h1v1h-1zM12 16h1v1h-1zM14 16h1v1h-1zM16 16h1v1h-1zM17 16h1v1h-1z" fill="#a09000"/><rect x="6" y="16" width="3" height="1" fill="#202020"/>
</svg>
<div class="t" style="left:575.70px;top:100px;color:#000;letter-spacing:-0.309px;line-height:13px">Source</div>
<svg class="a" style="left:614px;top:104px" width="7" height="4"><path d="M0 0h7L3.5 4z" fill="#000"/></svg>
<svg class="a" style="left:630px;top:94px" width="24" height="22">
<g fill="#fff" stroke="#fff" stroke-width="1.6" stroke-linejoin="round"><path d="M5.5 10h8l-4 4.5z"/><path d="M8 10.5Q8 6 12.5 5L12.5 6.5Q10.5 7.5 11 10.5z"/><path d="M12.5 12.5h8l-4-4z"/><path d="M15 12Q15 17 13.5 18L15 18Q17.5 16 18 12z"/></g>
<g fill="#1f8a26"><path d="M5.5 10h8l-4 4.5z"/><path d="M8 10.5Q8 6 12.5 5L12.5 6.5Q10.5 7.5 11 10.5z"/><path d="M12.5 12.5h8l-4-4z"/><path d="M15 12Q15 17 13.5 18L15 18Q17.5 16 18 12z"/></g>
</svg>
<div class="a" style="left:658px;top:97px;width:1px;height:18px;background:#aca899;"></div>
<div class="a" style="left:659px;top:97px;width:1px;height:18px;background:#fff;"></div>
<svg class="a" style="left:664px;top:96px" width="20" height="18" shape-rendering="crispEdges">
<rect x="4" y="3" width="14" height="10" fill="#fff"/><rect x="3" y="4" width="2" height="7" fill="#c4c4c4"/><rect x="18" y="4" width="1" height="8" fill="#808080"/>
<rect x="7" y="4" width="10" height="1" fill="#000"/><rect x="7" y="5" width="1" height="7" fill="#404040"/><rect x="8" y="5" width="8" height="6" fill="#fff"/>
<rect x="16" y="5" width="1" height="6" fill="#008080"/><rect x="8" y="11" width="9" height="1" fill="#008080"/>
<path d="M9 10h1v1h-1zM10 9h1v1h-1zM10 8h1v1h-1zM11 7h1v1h-1zM11 6h1v1h-1zM12 5h2v1h-2zM14 6h1v1h-1zM13 7h1v1h-1zM12 8h1v1h-1zM13 9h1v1h-1zM14 10h1v1h-1zM15 5h1v1h-1z" fill="#0018f0"/>
<path d="M4 12h1v1h13v-1h1v2h-14v-1h-1z" fill="#000"/><rect x="8" y="14" width="1" height="1" fill="#d00000"/><rect x="14" y="14" width="1" height="1" fill="#d00000"/><rect x="10" y="14" width="1" height="1" fill="#c8b000"/>
<path d="M5 15h1v1h-1zM6 16h1v1h-1zM8 16h1v1h-1zM10 16h1v1h-1zM12 16h1v1h-1zM14 16h1v1h-1zM16 16h1v1h-1zM17 16h1v1h-1z" fill="#a09000"/><rect x="6" y="16" width="3" height="1" fill="#202020"/>
</svg>
<div class="t" style="left:686.70px;top:100px;color:#000;letter-spacing:0.031px;line-height:13px">(empty)</div>
<svg class="a" style="left:731px;top:104px" width="7" height="4"><path d="M0 0h7L3.5 4z" fill="#000"/></svg>
<div class="t" style="left:555.00px;top:127px;color:#000;letter-spacing:-0.356px;line-height:13px">File:</div>
<div class="a" style="left:586px;top:122px;width:95px;height:21px;background:#fff;border:1px solid #aca899;border-right-color:#fff;border-bottom-color:#fff"></div>
<div class="a" style="left:587px;top:123px;width:93px;height:19px;background:transparent;border:1px solid #716f64;border-right-color:#f1efe2;border-bottom-color:#f1efe2"></div>
<div class="t" style="left:588.70px;top:127px;color:#000;letter-spacing:-0.899px;line-height:13px;width:75px;overflow:hidden">ORDRENT1.CCP</div>
<div class="rb" style="left:664px;top:124px;width:16px;height:17px"></div>
<svg class="a" style="left:669px;top:130px" width="7" height="4"><path d="M0 0h7L3.5 4z" fill="#000"/></svg>
<div class="a" style="left:685px;top:121px;width:27px;height:22px;background:transparent;border:1px solid #aca899;border-right:none;border-bottom-color:#fff"></div>
<div class="t" style="left:688.70px;top:127px;color:#000;letter-spacing:0.236px;line-height:13px">0/0</div>
<div class="rb" style="left:712px;top:121px;width:14px;height:21px"></div>
<div class="rb" style="left:728px;top:121px;width:15px;height:21px"></div>
<svg class="a" style="left:717px;top:129px" width="4" height="7"><path d="M4 0v7L0 3.5z" fill="#aca899"/></svg>
<svg class="a" style="left:733px;top:129px" width="4" height="7"><path d="M0 0v7L4 3.5z" fill="#aca899"/></svg>
<div class="a" style="left:552px;top:145px;width:193px;height:390px;background:#ece9d8;border-left:1px solid #aca899;border-top:1px solid #aca899"></div>
<div class="a" style="left:553px;top:146px;width:192px;height:389px;background:transparent;border-left:1px solid #716f64;border-top:1px solid #716f64"></div>
<div class="a" style="left:554px;top:147px;width:191px;height:1px;background:#fff;"></div>
<div class="a" style="left:554px;top:147px;width:1px;height:388px;background:#fff;"></div>
<svg class="a" style="left:559px;top:151px" width="15" height="16" shape-rendering="crispEdges">
<path d="M0.5 0.5h10l3 3v11h-13z" fill="#b8b4a4" stroke="#fff" stroke-width="1"/><path d="M1 1h9l3 3v10h-12z" fill="#aca899"/>
<path d="M4 11l5-5M5 7a4 4 0 1 1 6 5" fill="none" stroke="#fff"/>
</svg>
<svg class="a" style="left:580px;top:158px" width="7" height="4"><path d="M0 0h7L3.5 4z" fill="#000"/></svg>
<div class="a" style="left:593px;top:150px;width:132px;height:17px;background:#fff;border:1px solid #716f64;border-right-color:#fff;border-bottom-color:#fff;box-shadow:inset 1px 1px 0 #aca899"></div>
<div class="rb" style="left:727px;top:147px;width:14px;height:21px"></div>
<svg class="a" style="left:732px;top:154px" width="4" height="8"><path d="M0 0v8L4 4z" fill="#000"/></svg>
<div class="a" style="left:555px;top:169px;width:172px;height:1px;background:#fff;"></div>
<div class="a" style="left:555px;top:170px;width:14px;height:349px;background:#ece9d8;"></div>
<div class="a" style="left:569px;top:170px;width:1px;height:349px;background:#0a0a30;"></div>
<div class="a" style="left:570px;top:170px;width:38px;height:349px;background:#ebebeb;"></div>
<div class="a" style="left:608px;top:170px;width:119px;height:349px;background:#fff;"></div>
<div class="a" style="left:608px;top:183px;width:8px;height:4px;background:#0a1aa0;"></div>
<div class="m" style="left:664px;top:172px;width:63px;height:16px">IDENTIFI</div>
<div class="m" style="left:656px;top:188px;width:71px;height:16px"><span class="st">*</span></div>
<div class="m" style="left:656px;top:204px;width:71px;height:16px"><span class="st">*</span> RescueW</div>
<div class="m" style="left:656px;top:220px;width:71px;height:16px"><span class="st">*</span></div>
<div class="m" style="left:656px;top:236px;width:71px;height:16px"><span class="st">*</span> Author:</div>
<div class="m" style="left:656px;top:252px;width:71px;height:16px"><span class="st">*</span></div>
<div class="m" style="left:656px;top:268px;width:71px;height:16px"><span class="st">*</span> This pr</div>
<div class="m" style="left:656px;top:284px;width:71px;height:16px"><span class="st">*</span> validat</div>
<div class="m" style="left:656px;top:300px;width:71px;height:16px"><span class="st">*</span></div>
<div class="m" style="left:664px;top:316px;width:63px;height:16px">PROGRAM-</div>
<div class="m" style="left:656px;top:332px;width:71px;height:16px"><span class="st">*</span></div>
<div class="m" style="left:664px;top:348px;width:63px;height:16px">ENVIRONM</div>
<div class="m" style="left:656px;top:364px;width:71px;height:16px"><span class="st">*</span></div>
<div class="m" style="left:664px;top:380px;width:63px;height:16px">DATA DIV</div>
<div class="m" style="left:656px;top:396px;width:71px;height:16px"><span class="st">*</span></div>
<div class="m" style="left:664px;top:412px;width:63px;height:16px">WORKING-</div>
<div class="m" style="left:656px;top:428px;width:71px;height:16px"><span class="st">*</span></div>
<div class="m" style="left:664px;top:444px;width:63px;height:16px">01  SWIT</div>
<div class="m" style="left:656px;top:460px;width:71px;height:16px"><span class="st">*</span></div>
<div class="m" style="left:695px;top:476px;width:32px;height:16px">05</div>
<div class="m" style="left:656px;top:492px;width:71px;height:16px"></div>
<div class="m" style="left:695px;top:508px;width:32px;height:11px">05</div>
<div class="a" style="left:576px;top:447px;width:9px;height:9px;border:1px solid #7a8aa0;background:#fff"></div>
<div class="a" style="left:578px;top:451px;width:5px;height:1px;background:#000;"></div>
<div class="a" style="left:583px;top:479px;width:9px;height:9px;border:1px solid #7a8aa0;background:#fff"></div>
<div class="a" style="left:585px;top:483px;width:5px;height:1px;background:#000;"></div>
<div class="a" style="left:583px;top:511px;width:9px;height:9px;border:1px solid #7a8aa0;background:#fff"></div>
<div class="a" style="left:585px;top:515px;width:5px;height:1px;background:#000;"></div>
<div class="a" style="left:580px;top:456px;width:1px;height:63px;background:transparent;border-left:1px dashed #808080"></div>
<div class="a" style="left:587px;top:488px;width:1px;height:11px;background:transparent;border-left:1px dashed #808080"></div>
<div class="a" style="left:588px;top:499px;width:9px;height:1px;background:transparent;border-top:1px dashed #808080"></div>
<div class="a" style="left:727px;top:169px;width:15px;height:350px;background:#fff;border-left:1px solid #aca899;border-right:1px solid #ece9d8"></div>
<div class="rb" style="left:727px;top:171px;width:14px;height:16px"></div>
<svg class="a" style="left:730px;top:177px" width="8" height="5"><path d="M0 4h8L4 0z" fill="#000"/></svg>
<div class="rb" style="left:727px;top:188px;width:14px;height:7px"></div>
<div class="rb" style="left:727px;top:502px;width:14px;height:15px"></div>
<svg class="a" style="left:730px;top:507px" width="8" height="5"><path d="M0 0h8L4 4z" fill="#000"/></svg>
<div class="a" style="left:742px;top:145px;width:3px;height:390px;background:#ece9d8;"></div>
<div class="a" style="left:742px;top:147px;width:1px;height:386px;background:#cfccbe;"></div>
<div class="a" style="left:744px;top:145px;width:1px;height:390px;background:#f8f7f2;"></div>
<div class="a" style="left:555px;top:518px;width:172px;height:16px;background:#fff;"></div>
<div class="rb" style="left:555px;top:518px;width:15px;height:14px"></div>
<svg class="a" style="left:560px;top:521px" width="5" height="8"><path d="M5 0v8L0 4z" fill="#000"/></svg>
<div class="rb" style="left:571px;top:518px;width:21px;height:14px"></div>
<div class="rb" style="left:711px;top:518px;width:15px;height:14px"></div>
<svg class="a" style="left:716px;top:521px" width="5" height="8"><path d="M0 0v8L5 4z" fill="#000"/></svg>
<div class="a" style="left:727px;top:518px;width:16px;height:17px;background:#ece9d8;"></div>
<div class="a" style="left:555px;top:533px;width:188px;height:2px;background:#ece9d8;"></div>
</body></html>
